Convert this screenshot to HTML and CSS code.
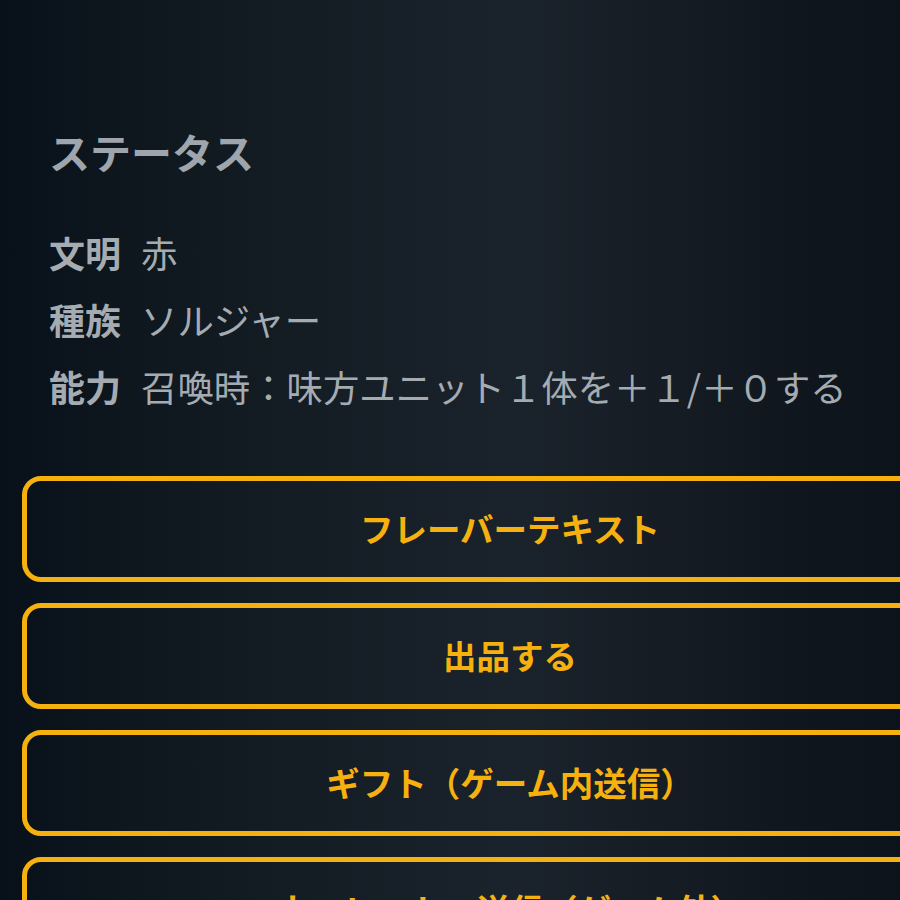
FILE: index.html
```html
<!DOCTYPE html>
<html lang="ja">
<head>
<meta charset="utf-8">
<title>ステータス</title>
<link rel="stylesheet" href="styles.css">
</head>
<body>
<main class="page">
  <section class="status">
    <h2 class="status-title">ステータス</h2>
    <dl class="status-list">
      <div class="status-row"><dt>文明</dt><dd>赤</dd></div>
      <div class="status-row"><dt>種族</dt><dd>ソルジャー</dd></div>
      <div class="status-row"><dt>能力</dt><dd>召喚時：味方ユニット１体を＋１/＋０する</dd></div>
    </dl>
  </section>
  <div class="actions">
    <button class="action-btn" type="button">フレーバーテキスト</button>
    <button class="action-btn" type="button">出品する</button>
    <button class="action-btn" type="button">ギフト（ゲーム内送信）</button>
    <button class="action-btn" type="button">ウォレットへ送信（ゲーム外）</button>
  </div>
</main>
</body>
</html>
```

FILE: styles.css
```css
html, body {
  margin: 0;
  padding: 0;
  overflow: hidden;
  height: 100%;
}

body {
  background: linear-gradient(90deg, #08101a 0%, #0e161e 14%, #131b23 30%, #182029 48%, #1a222b 58%, #161d25 72%, #10171f 86%, #0c131b 100%);
  font-family: "Noto Sans CJK JP", "Noto Sans", sans-serif;
}

.page {
  width: 1020px;
  box-sizing: border-box;
  padding: 126px 22px 0 22px;
}

.status {
  padding-left: 27px;
}

.status-title {
  margin: 0;
  font-size: 41px;
  line-height: 50px;
  font-weight: 700;
  color: #9ea5ac;
}

.status-list {
  margin: 51px 0 0 0;
  display: flex;
  flex-direction: column;
  gap: 16px;
}

.status-row {
  display: flex;
  gap: 20px;
  font-size: 36px;
  line-height: 51px;
  color: #a4abb1;
}

.status-row dt {
  font-weight: 700;
}

.status-row dd {
  margin: 0;
  font-size: 36.4px;
  font-weight: 400;
  white-space: nowrap;
}

.actions {
  margin-top: 64px;
  display: flex;
  flex-direction: column;
  gap: 21px;
}

.action-btn {
  height: 106px;
  box-sizing: border-box;
  border: 5px solid #f6b10f;
  border-radius: 19px;
  background: transparent;
  color: #f6b10f;
  font-family: "Noto Sans CJK JP", "Noto Sans", sans-serif;
  font-size: 33.5px;
  font-weight: 700;
  padding: 0 0 3px 0;
  display: flex;
  align-items: center;
  justify-content: center;
}
```
